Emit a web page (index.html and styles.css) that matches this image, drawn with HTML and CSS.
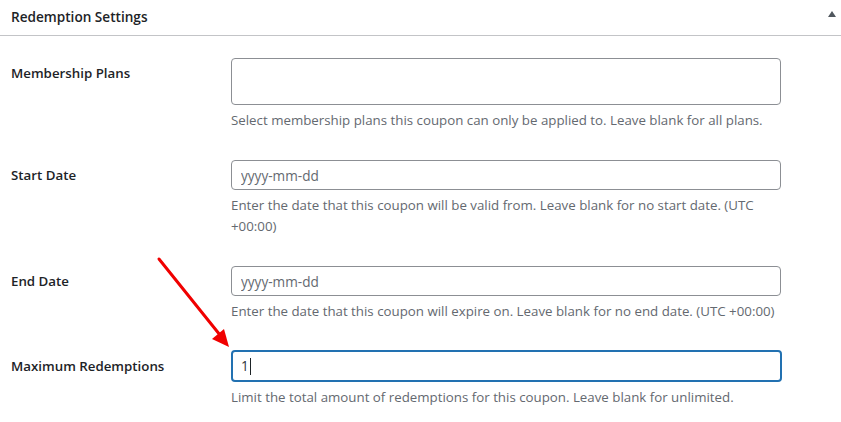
FILE: index.html
```html
<!DOCTYPE html>
<html>
<head>
<meta charset="utf-8">
<link rel="stylesheet" href="styles.css">
</head>
<body>
<div class="panel">
  <div class="panel-head">
    <h2 class="panel-title">Redemption Settings</h2>
    <span class="toggle"></span>
  </div>
  <div class="panel-body">
    <div class="row">
      <div class="label">Membership Plans</div>
      <div class="field">
        <div class="multi"></div>
        <p class="desc">Select membership plans this coupon can only be applied to. Leave blank for all plans.</p>
      </div>
    </div>
    <div class="row">
      <div class="label">Start Date</div>
      <div class="field">
        <input class="text" type="text" placeholder="yyyy-mm-dd">
        <p class="desc">Enter the date that this coupon will be valid from. Leave blank for no start date. (UTC +00:00)</p>
      </div>
    </div>
    <div class="row">
      <div class="label">End Date</div>
      <div class="field">
        <input class="text" type="text" placeholder="yyyy-mm-dd">
        <p class="desc">Enter the date that this coupon will expire on. Leave blank for no end date. (UTC +00:00)</p>
      </div>
    </div>
    <div class="row row-tight">
      <div class="label label-focus">Maximum Redemptions</div>
      <div class="field">
        <div class="text focused"><span class="val">1</span><span class="caret"></span></div>
        <p class="desc">Limit the total amount of redemptions for this coupon. Leave blank for unlimited.</p>
      </div>
    </div>
  </div>
  <svg class="arrow" width="841" height="422" viewBox="0 0 841 422">
    <line x1="159" y1="259" x2="220" y2="335" stroke="#f00000" stroke-width="3" stroke-linecap="round"/>
    <polygon points="229,347 212,339 224,329" fill="#f00000"/>
  </svg>
</div>
</body>
</html>
```
FILE: styles.css
```css
html, body {
  margin: 0;
  padding: 0;
  background: #fff;
}
body {
  font-family: "Open Sans", "Noto Sans", sans-serif;
  font-size: 13.3px;
  color: #1d2327;
  width: 841px;
  height: 422px;
  overflow: hidden;
}
.panel {
  position: relative;
  height: 422px;
}
.panel-head {
  display: flex;
  align-items: center;
  justify-content: space-between;
  height: 36px;
  border-bottom: 1px solid #c3c4c7;
  padding: 0 5px 3px 11px;
  box-sizing: border-box;
}
.panel-title {
  margin: 0;
  font-size: 13.6px;
  font-weight: 600;
  color: #1d2327;
}
.toggle {
  width: 0;
  height: 0;
  border-left: 4px solid transparent;
  border-right: 4px solid transparent;
  border-bottom: 6px solid #50575e;
  margin-bottom: 4px;
}
.panel-body {
  padding-top: 7px;
}
.row {
  display: flex;
  padding: 15px 0 14px 0;
}
.row-tight {
  padding-top: 14px;
}
.label {
  width: 220px;
  padding-left: 11px;
  line-height: 30px;
  font-weight: 600;
  color: #1d2327;
}
.label-focus {
  line-height: 32px;
}
.field {
  width: 550px;
}
.multi {
  height: 47px;
  border: 1px solid #8c8f94;
  border-radius: 4px;
  box-sizing: border-box;
}
.text {
  display: block;
  width: 550px;
  height: 30px;
  margin: 0;
  border: 1px solid #8c8f94;
  border-radius: 4px;
  box-sizing: border-box;
  padding: 0 9px;
  font-family: inherit;
  font-size: 13.6px;
  color: #2c3338;
  background: #fff;
  outline: none;
}
.text::placeholder {
  color: #646970;
  opacity: 1;
}
.focused {
  display: flex;
  align-items: center;
  height: 32px;
  width: 551px;
  border: 2px solid #2271b1;
  padding: 0 8px;
}
.val {
  line-height: 1;
}
.caret {
  width: 1px;
  height: 17px;
  background: #1d2327;
  margin-left: 1px;
}
.desc {
  margin: 5px 0 0 0;
  line-height: 21px;
  color: #646970;
}
.arrow {
  position: absolute;
  left: 0;
  top: 0;
  pointer-events: none;
}
```
